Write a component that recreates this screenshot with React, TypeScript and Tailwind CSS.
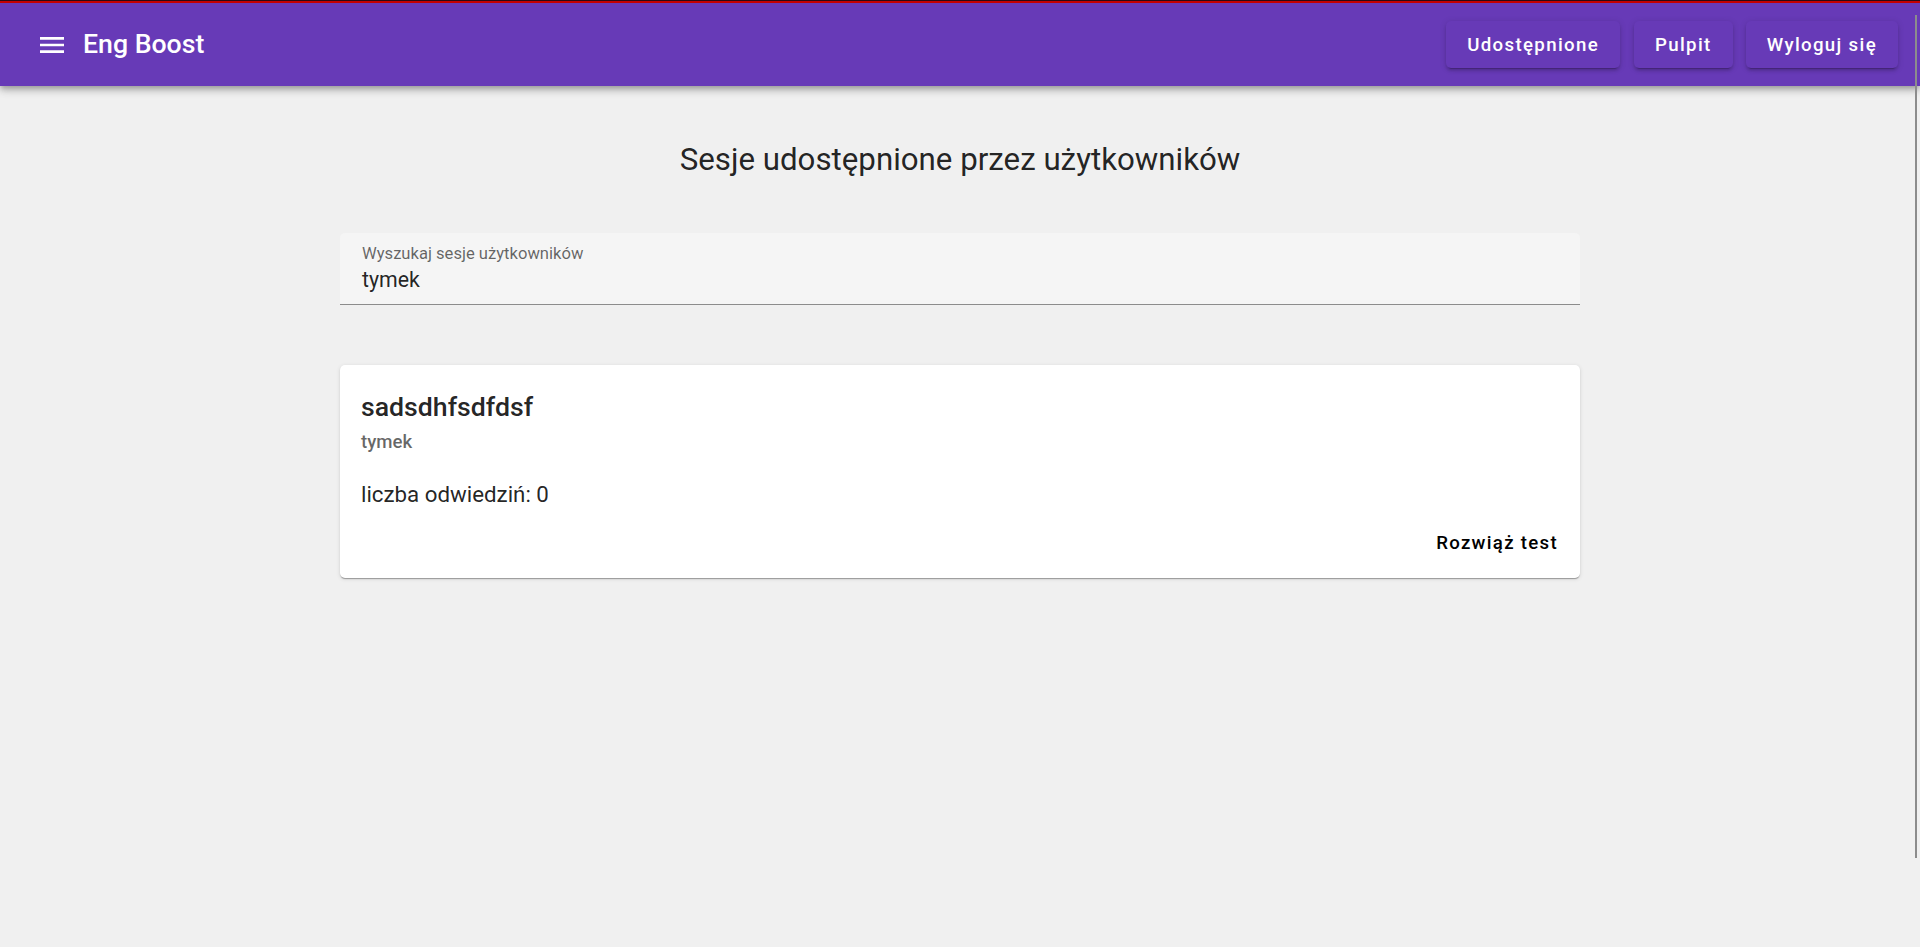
import React from "react";

const font = { fontFamily: "Roboto, 'Noto Sans', Arial, sans-serif" };

function MenuIcon() {
  return (
    <svg width="32" height="32" viewBox="0 0 24 24" fill="white" aria-hidden="true">
      <path d="M3 18h18v-2H3zm0-5h18v-2H3zm0-7v2h18V6z" />
    </svg>
  );
}

function NavButton({ children, className = "" }: { children: React.ReactNode; className?: string }) {
  return (
    <button className={`h-[47px] px-[21px] rounded-[5px] bg-[#673ab7] text-white text-[18.67px] font-medium tracking-[1.35px] shadow-[0_4px_1px_-3px_rgba(0,0,0,0.2),0_3px_3px_0_rgba(0,0,0,0.14),0_1px_7px_0_rgba(0,0,0,0.12)] ${className}`}>
      {children}
    </button>
  );
}

export default function App() {
  return (
    <div style={font} className="relative min-h-[947px] bg-[#f0f0f0] text-[rgba(0,0,0,0.87)]">
      <header className="relative z-10 flex flex-col h-[86px] bg-[#673ab7] shadow-[0_3px_5px_-1px_rgba(0,0,0,0.2),0_5px_7px_0_rgba(0,0,0,0.14),0_1px_13px_0_rgba(0,0,0,0.12)]">
        <div className="h-[1px] bg-[#2a0a14]" />
        <div className="h-[2px] bg-[#c40000]" />
        <div className="flex flex-1 items-center pl-[36px] pr-[22px]">
          <MenuIcon />
          <div className="ml-[15px] text-white text-[26.67px] font-medium leading-none">Eng Boost</div>
          <div className="ml-auto flex items-center">
            <NavButton>Udostępnione</NavButton>
            <NavButton className="ml-[14px]">Pulpit</NavButton>
            <NavButton className="ml-[13px]">Wyloguj się</NavButton>
          </div>
        </div>
      </header>

      <main className="w-[1240px] mx-auto pt-[53px]">
        <h1 className="text-center text-[31.25px] font-normal leading-[42px]">
          Sesje udostępnione przez użytkowników
        </h1>

        <div className="mt-[52px] h-[72px] bg-[#f5f5f5] rounded-t-[5px] border-b border-[#8c8c8c] px-[22px] pt-[11px]">
          <div className="text-[16.6px] leading-[20px] text-[rgba(0,0,0,0.6)]">Wyszukaj sesje użytkowników</div>
          <div className="mt-[2px] text-[21.33px] leading-[28px]">tymek</div>
        </div>

        <div className="mt-[60px] bg-white rounded-[5px] shadow-[0_2px_1px_-1px_rgba(0,0,0,0.2),0_1px_1px_0_rgba(0,0,0,0.14),0_1px_4px_0_rgba(0,0,0,0.12)] pt-[21px]">
          <div className="px-[21px]">
            <div className="text-[26.67px] font-medium leading-[42px]">sadsdhfsdfdsf</div>
            <div className="text-[18.67px] font-medium leading-[29px] text-[rgba(0,0,0,0.6)]">tymek</div>
            <div className="mt-[21px] text-[22.3px] leading-[32px]">liczba odwiedziń: 0</div>
          </div>
          <div className="flex justify-end pt-[9px] pb-[11px] pr-[11px]">
            <button className="h-[48px] px-[11px] rounded-[5px] text-[18.67px] font-medium tracking-[1.3px] text-black">
              Rozwiąż test
            </button>
          </div>
        </div>
      </main>

      <div className="absolute left-[1915px] top-[15px] w-[2px] h-[843px] bg-[#8c8c8c] z-20" />
    </div>
  );
}
